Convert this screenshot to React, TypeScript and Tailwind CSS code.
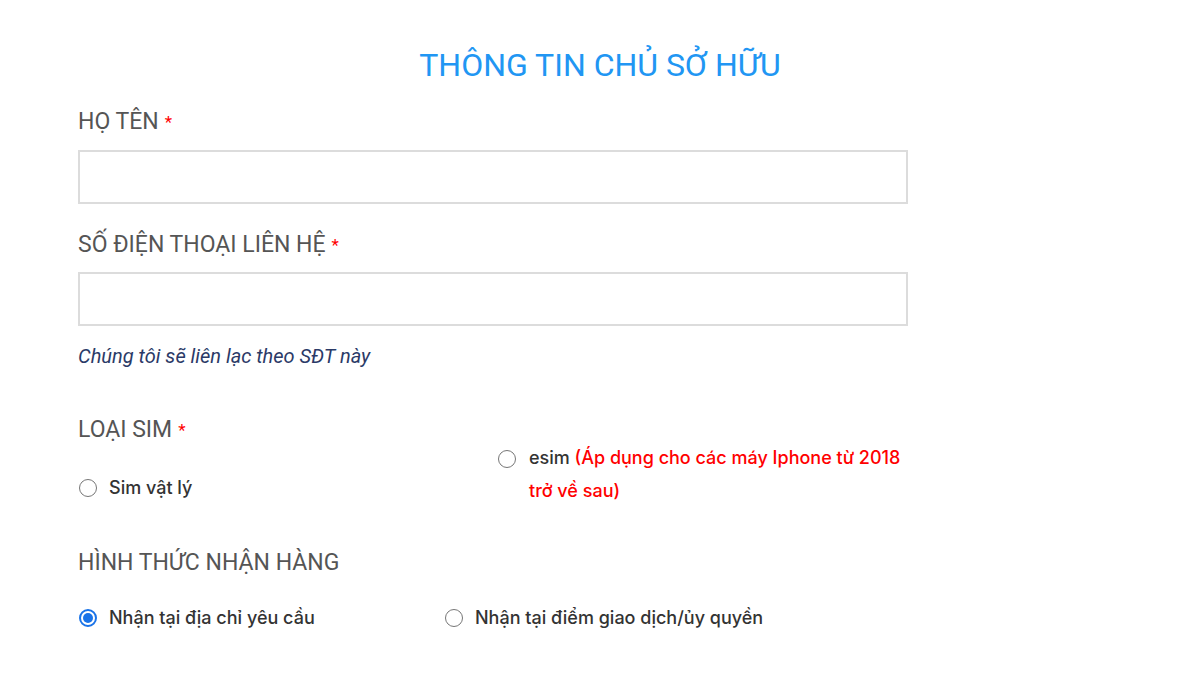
import React from 'react';

const Radio = ({ checked = false }: { checked?: boolean }) => (
  <span
    className={
      'inline-flex shrink-0 items-center justify-center w-[18px] h-[18px] rounded-full border ' +
      (checked ? 'border-[#1a73e8] border-2' : 'border-[#767676] bg-white')
    }
  >
    {checked && <span className="w-[10px] h-[10px] rounded-full bg-[#1a73e8]" />}
  </span>
);

const Label = ({ text, required = false }: { text: string; required?: boolean }) => (
  <div className="text-[23px] leading-[26px] text-[#555] font-['Roboto',sans-serif]">
    {text}
    {required && <span className="text-[#f00] ml-[6px] text-[17px] align-top">*</span>}
  </div>
);

export default function App() {
  return (
    <div className="w-[1200px] h-[675px] bg-white overflow-hidden font-['Roboto',sans-serif]">
      <h1 className="pt-[45px] text-center text-[32px] leading-[40px] text-[#2196f3] font-normal">
        THÔNG TIN CHỦ SỞ HỮU
      </h1>

      <div className="ml-[78px] w-[830px]">
        <div className="mt-[24px]">
          <Label text="HỌ TÊN" required />
          <input className="mt-[15px] block w-full h-[54px] border-2 border-[#dcdcdc] outline-none" />
        </div>

        <div className="mt-[28px]">
          <Label text="SỐ ĐIỆN THOẠI LIÊN HỆ" required />
          <input className="mt-[14px] block w-full h-[54px] border-2 border-[#dcdcdc] outline-none" />
          <p className="mt-[17px] text-[20px] leading-[26px] italic text-[#2b3a67]">
            Chúng tôi sẽ liên lạc theo SĐT này
          </p>
        </div>

        <div className="mt-[48px]">
          <Label text="LOẠI SIM" required />
          <div className="mt-[-2px] flex items-end font-['Inter',sans-serif] text-[18px] leading-[33px] font-medium text-[#333]">
            <label className="flex items-center gap-[12px] w-[420px] pl-px mb-[3px]">
              <Radio />
              <span>Sim vật lý</span>
            </label>
            <div className="flex items-start gap-[13px] w-[410px]">
              <span className="mt-[4px]">
                <Radio />
              </span>
              <p>
                esim <span className="text-[#f00]">(Áp dụng cho các máy Iphone từ 2018 trở về sau)</span>
              </p>
            </div>
          </div>
        </div>

        <div className="mt-[43px]">
          <Label text="HÌNH THỨC NHẬN HÀNG" />
          <div className="mt-[29px] flex items-center font-['Inter',sans-serif] text-[18px] leading-[26px] font-medium text-[#333]">
            <label className="flex items-center gap-[12px] w-[367px] pl-px">
              <Radio checked />
              <span>Nhận tại địa chỉ yêu cầu</span>
            </label>
            <label className="flex items-center gap-[12px]">
              <Radio />
              <span>Nhận tại điểm giao dịch/ủy quyền</span>
            </label>
          </div>
        </div>
      </div>
    </div>
  );
}
